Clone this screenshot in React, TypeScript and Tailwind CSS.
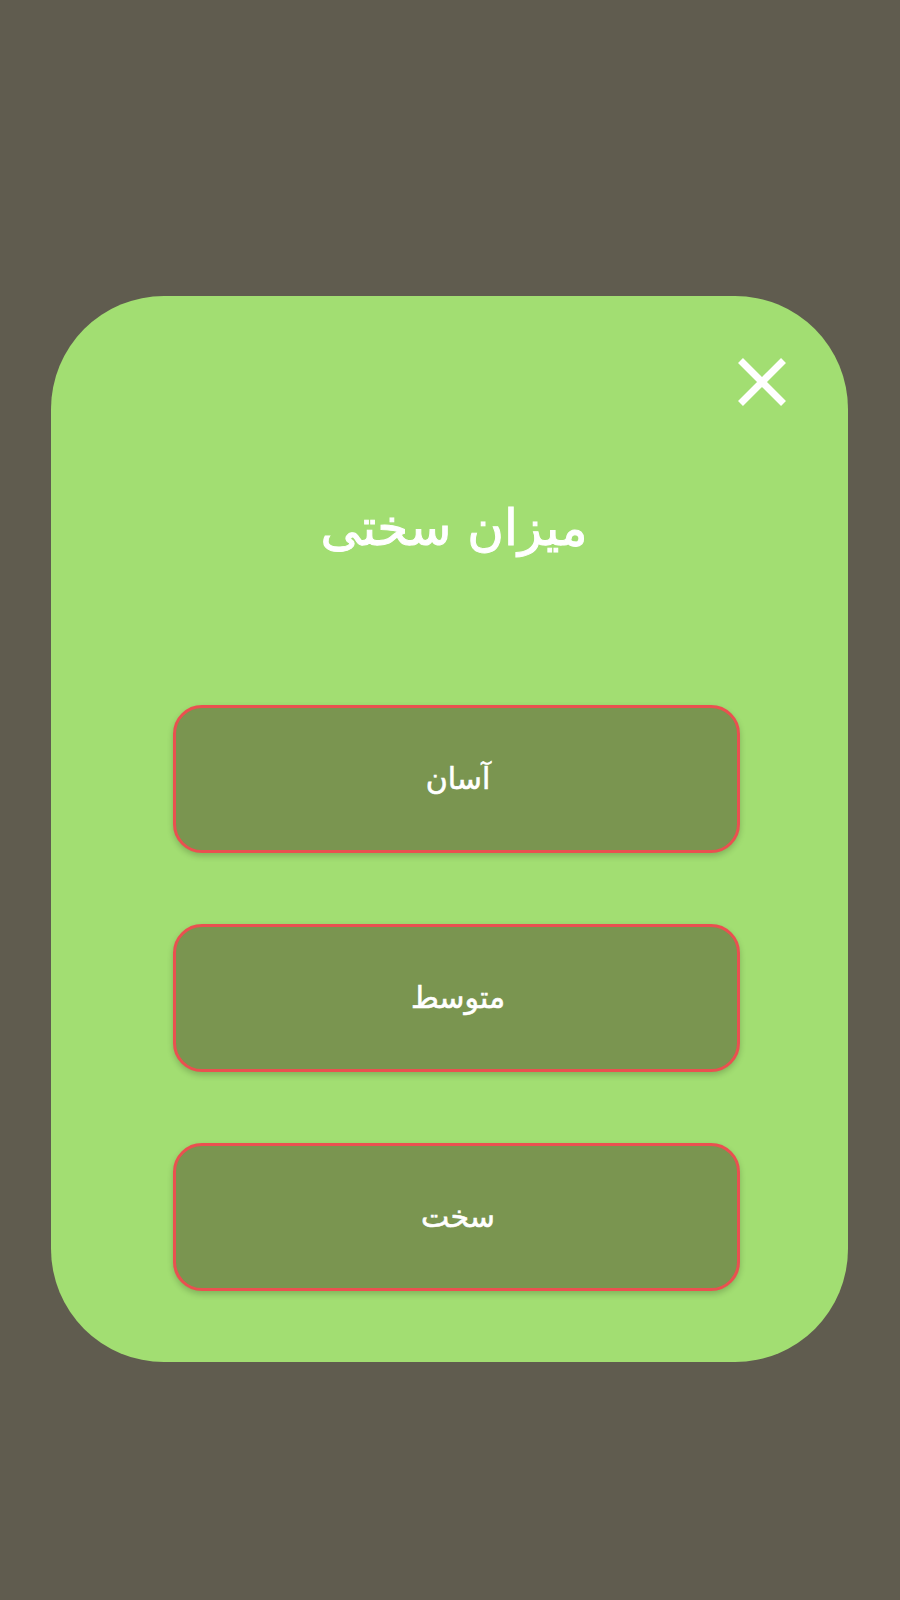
export default function App() {
  const options = ["آسان", "متوسط", "سخت"];
  return (
    <div dir="ltr" className="w-[900px] h-[1600px] bg-[#605c4f] pt-[296px] pl-[51px]" style={{ fontFamily: '"DejaVu Sans", "Noto Sans", sans-serif' }}>
      <div className="w-[797px] h-[1066px] bg-[#a2de72] rounded-[113px] flex flex-col">
        <div className="flex justify-end pt-[61px] pr-[61px]">
          <svg width="50" height="50" viewBox="0 0 50 50" fill="none" stroke="#ffffff" strokeWidth="7">
            <path d="M3.5 3.5 L46.5 46.5 M46.5 3.5 L3.5 46.5" />
          </svg>
        </div>
        <h1 dir="rtl" className="mt-[85px] h-[72px] flex items-center justify-center text-white text-[50px] font-normal leading-none pl-[9px] [-webkit-text-stroke:1px_#ffffff]">میزان سختی</h1>
        <div className="mt-[141px] ml-[122px] w-[567px] flex flex-col gap-[71px]">
          {options.map((o) => (
            <button key={o} dir="rtl" className="h-[148px] rounded-[29px] border-[3px] border-[#ea5050] bg-[#7a9550] text-white text-[30px] leading-none pl-[3px] [-webkit-text-stroke:0.6px_#ffffff] shadow-[0_3px_6px_rgba(0,0,0,0.2)] flex items-center justify-center">
              {o}
            </button>
          ))}
        </div>
      </div>
    </div>
  );
}
